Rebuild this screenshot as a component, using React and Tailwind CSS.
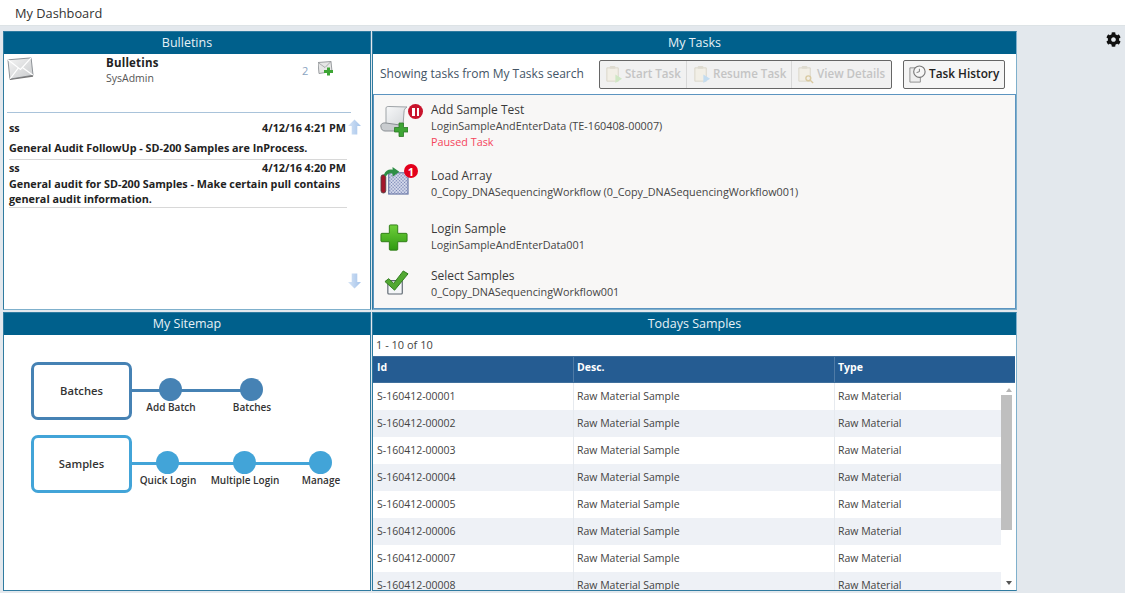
import { FaCog } from 'react-icons/fa';

const samples = ['00001', '00002', '00003', '00004', '00005', '00006', '00007', '00008'];

function PanelHeader({ title }) {
  return (
    <div className="h-[22px] shrink-0 bg-[#00608c] text-center text-[12.5px] leading-[22px] text-[#e6f1f6]">{title}</div>
  );
}

function MailIcon({ className }) {
  return (
    <svg viewBox="0 0 28 24" className={className}>
      <defs>
        <linearGradient id="mail" x1="0" x2="1" y1="0" y2="1">
          <stop offset="0" stopColor="#f4f4f4" />
          <stop offset="1" stopColor="#c9cbcd" />
        </linearGradient>
      </defs>
      <path d="M1 3 L25 1 L27 19 L3 23 Z" fill="url(#mail)" stroke="#8a8f94" strokeWidth="1" />
      <path d="M1 3 L14 13 L25 1 M3 23 L12 11 M27 19 L16 11" fill="none" stroke="#fff" strokeWidth="1.2" />
      <path d="M3 23 L27 19 L27 20.5 L3 24 Z" fill="#777" />
    </svg>
  );
}

function ArrowIcon({ down, className }) {
  return (
    <svg viewBox="0 0 14 16" className={className}>
      <defs>
        <linearGradient id={down ? 'arrow-down' : 'arrow-up'} x1="0" x2="1" y1="0" y2="0">
          <stop offset="0" stopColor="#d6e4f6" />
          <stop offset="1" stopColor="#a4c3ea" />
        </linearGradient>
      </defs>
      <path
        d={down ? 'M4 0 H10 V9 H14 L7 16 L0 9 H4 Z' : 'M7 0 L14 7 H10 V16 H4 V7 H0 Z'}
        fill={`url(#${down ? 'arrow-down' : 'arrow-up'})`}
      />
    </svg>
  );
}

function ClipIcon({ accent }) {
  return (
    <svg viewBox="0 0 20 20" className="size-[19px] shrink-0">
      <path d="M3 3 H15 V17 H3 Z" fill="#f2efe6" stroke="#d9d5c8" strokeWidth="1" />
      <rect x="6" y="1" width="6" height="3" rx="1" fill="#dedbd0" />
      {accent === 'search' ? (
        <g fill="none" stroke="#d9c9a0" strokeWidth="1.4">
          <circle cx="13" cy="14" r="2.6" />
          <path d="M15 16 L18 19" />
        </g>
      ) : (
        <path d="M12 10 L19 14.5 L12 19 Z" fill={accent} />
      )}
    </svg>
  );
}

function ScrollIcon() {
  return (
    <svg viewBox="0 0 28 31" className="mt-[4px] h-[31px] w-[28px]">
      <defs>
        <linearGradient id="paper" x1="0" x2="1" y1="0" y2="1">
          <stop offset="0" stopColor="#f7f8f9" />
          <stop offset="1" stopColor="#d3d6d9" />
        </linearGradient>
      </defs>
      <path d="M6 2 C6 0.5 8 0.5 9 0.5 L27 1 C25 2 24 4 24 6 L23 20 L6 20 Z" fill="url(#paper)" stroke="#9ea3a7" strokeWidth="1" />
      <path d="M1 21 C0 18 3 16.5 6 17 L20 19 L18 25 L5 25 C3 25 1 23.5 1 21 Z" fill="#c9cccf" stroke="#8a8f93" strokeWidth="1" />
      <path d="M19 17 H23.5 V21.5 H28 V26 H23.5 V30.5 H19 V26 H14.5 V21.5 H19 Z" fill="#3fa535" stroke="#2b7a25" strokeWidth="0.8" />
    </svg>
  );
}

function ArrayIcon() {
  return (
    <svg viewBox="0 0 30 30" className="mt-[-2px] h-[29px] w-[29px]">
      <defs>
        <pattern id="dots" width="2.4" height="2.4" patternUnits="userSpaceOnUse" patternTransform="rotate(45)">
          <rect width="2.4" height="2.4" fill="#dfe4f2" />
          <circle cx="1.2" cy="1.2" r="0.8" fill="#6b79ad" />
        </pattern>
      </defs>
      <rect x="9" y="7" width="20" height="22" fill="url(#dots)" stroke="#6c7aa8" strokeWidth="1.2" />
      <rect x="1" y="9" width="5" height="19" rx="2.5" fill="#a3162a" stroke="#444" strokeWidth="0.8" />
      <path d="M4 9 C6 4 10 3 13 4 L13 1 L20 6 L13 11 L13 8 C10 7 8 8 6 11 Z" fill="#2f8f46" />
    </svg>
  );
}

function PlusIcon() {
  return (
    <svg viewBox="0 0 30 30" className="mt-[3px] size-[28px]">
      <defs>
        <linearGradient id="plus" x1="0" x2="0" y1="0" y2="1">
          <stop offset="0" stopColor="#6fcf3a" />
          <stop offset="1" stopColor="#2f9a12" />
        </linearGradient>
      </defs>
      <path
        d="M10 2 Q10 1 11 1 H18 Q19 1 19 2 V10 H28 Q29 10 29 11 V18 Q29 19 28 19 H19 V27 Q19 28 18 28 H11 Q10 28 10 27 V19 H2 Q1 19 1 18 V11 Q1 10 2 10 H10 Z"
        fill="url(#plus)"
        stroke="#2c7a14"
        strokeWidth="1"
      />
    </svg>
  );
}

function CheckIcon() {
  return (
    <svg viewBox="0 0 26 26" className="ml-[4px] mt-[2px] size-[25px]">
      <rect x="4" y="11" width="15" height="14" rx="1" fill="#f4f6f8" stroke="#5d6670" strokeWidth="1.2" />
      <path d="M1 12 L5 9 L10 14 L20 1 L25 4 L11 21 Z" fill="#52a832" stroke="#2f7a1c" strokeWidth="1" />
    </svg>
  );
}

function TaskRow({ icon, badge, title, sub, note, className }) {
  return (
    <div className={`flex items-start ${className}`}>
      <div className="relative flex w-[57px] shrink-0 justify-start pl-[6px]">
        {icon}
        {badge}
      </div>
      <div className="min-w-0">
        <div className="text-[12px] leading-[16px] text-[#3a3a3a]">{title}</div>
        <div className="text-[10.8px] leading-[16px] text-[#444]">{sub}</div>
        {note && <div className="text-[10.8px] leading-[16px] text-[#f5455c]">{note}</div>}
      </div>
    </div>
  );
}

function SiteNode({ label, left, fill }) {
  return (
    <div className="absolute top-0 flex w-[90px] -translate-x-1/2 flex-col items-center" style={{ left }}>
      <div className={`size-[23px] rounded-full ${fill}`} />
      <span className="ml-[2px] mt-[-1px] text-[10px] font-semibold leading-[14px] text-[#333]">{label}</span>
    </div>
  );
}

function SiteRow({ label, border, fill, nodes, lineWidth, className }) {
  return (
    <div className={`flex items-start ${className}`}>
      <div className={`flex h-[58px] w-[101px] shrink-0 items-center justify-center rounded-[7px] border-[3px] bg-white text-[11.2px] font-semibold text-[#333] ${border}`}>
        {label}
      </div>
      <div className="relative mt-[16px] h-[40px] flex-1">
        <div className={`absolute left-0 top-[11px] h-[3px] ${fill}`} style={{ width: lineWidth }} />
        {nodes.map((n) => (
          <SiteNode key={n.label} label={n.label} left={n.left} fill={fill} />
        ))}
      </div>
    </div>
  );
}

export default function App() {
  return (
    <div className="flex h-[593px] w-[1125px] flex-col overflow-hidden bg-[#e3e8ed] font-['Open_Sans',sans-serif]">
      <div className="h-[26px] shrink-0 border-b border-[#dde3e6] bg-white pl-[15px] text-[12.8px] leading-[27px] text-[#333]">
        My Dashboard
      </div>

      <div className="relative ml-[3px] mt-[5px] box-content grid h-[560px] w-[1014px] grid-cols-[368px_645px] grid-rows-[279px_279px] gap-x-px gap-y-[2px]">
        {/* Bulletins */}
        <section className="flex flex-col overflow-hidden border border-[#2f7ba0] border-b-[#7fb0cc] bg-white">
          <PanelHeader title="Bulletins" />
          <div className="relative flex-1">
            <div className="mx-[3px] flex h-[59px] w-[344px] items-start border-b border-[#a9c3da]">
              <MailIcon className="mt-[2px] h-[25px] w-[27px] shrink-0" />
              <div className="ml-[72px] w-[196px] pt-px">
                <div className="text-[11.5px] font-bold leading-[15px] tracking-[0.2px] text-[#222]">Bulletins</div>
                <div className="text-[10.5px] leading-[17px] text-[#555]">SysAdmin</div>
              </div>
              <span className="mt-[9px] w-[16px] shrink-0 text-[11px] leading-[15px] text-[#8ba4bf]">2</span>
              <svg viewBox="0 0 16 14" className="mt-[7px] h-[15px] w-[16px] shrink-0">
                <path d="M0 1 L13 0 L14 10 L1 12 Z" fill="#e6e6e6" stroke="#85898d" strokeWidth="0.8" />
                <path d="M0 1 L7 6 L13 0" fill="none" stroke="#9a9da0" strokeWidth="0.8" />
                <path d="M9 6 H12 V8.5 H15 V11.5 H12 V14 H9 V11.5 H6 V8.5 H9 Z" fill="#3da535" />
              </svg>
            </div>

            <div className="ml-[5px] w-[338px] text-[10.8px] font-bold text-[#222]">
              <div className="flex justify-between pr-[1px] pt-[7px] leading-[15px]">
                <span>ss</span>
                <span>4/12/16 4:21 PM</span>
              </div>
              <div className="mt-[5px] border-b border-[#d8d8d8] pb-[4px] leading-[15px]">
                General Audit FollowUp - SD-200 Samples are InProcess.
              </div>
              <div className="flex justify-between pr-[1px] leading-[15px]">
                <span>ss</span>
                <span>4/12/16 4:20 PM</span>
              </div>
              <div className="border-b border-[#d8d8d8] pb-px pt-px leading-[15px]">
                General audit for SD-200 Samples - Make certain pull contains general audit information.
              </div>
            </div>

            <ArrowIcon className="absolute left-[344px] top-[65px] h-[16px] w-[13px]" />
            <ArrowIcon down className="absolute left-[344px] top-[219px] h-[16px] w-[13px]" />
          </div>
        </section>

        {/* My Tasks */}
        <section className="flex flex-col overflow-hidden border border-[#2f7ba0] border-b-[#7fb0cc] border-r-[#7fb0cc] bg-white">
          <PanelHeader title="My Tasks" />
          <div className="flex h-[41px] shrink-0 items-center border-b border-[#5c94c0] pl-[7px]">
            <span className="w-[219px] text-[12px] text-[#456]">Showing tasks from My Tasks search</span>
            <div className="flex h-[29px] w-[293px] rounded-[2px] border border-[#666] bg-[#f1f1f1] text-[11.6px] font-semibold text-[#c4c4c4]">
              <div className="flex w-[87px] items-center gap-[2px] border-r border-[#d8d8d8] pl-[4px]">
                <ClipIcon accent="#cfe7c4" />
                Start Task
              </div>
              <div className="flex w-[105px] items-center gap-[2px] border-r border-[#d8d8d8] pl-[5px]">
                <ClipIcon accent="#c3dcf0" />
                Resume Task
              </div>
              <div className="flex flex-1 items-center gap-[2px] pl-[4px]">
                <ClipIcon accent="search" />
                View Details
              </div>
            </div>
            <div className="ml-[11px] flex h-[29px] w-[102px] items-center gap-[2px] rounded-[2px] border border-[#666] bg-[#f5f5f5] pl-[4px] text-[11.8px] font-semibold text-[#222]">
              <svg viewBox="0 0 20 20" className="size-[19px] shrink-0">
                <path d="M2 3 H13 V18 H2 Z" fill="#eee" stroke="#8c8c8c" strokeWidth="1" />
                <circle cx="12" cy="7" r="6" fill="#f6f6f6" stroke="#777" strokeWidth="1.2" />
                <path d="M12 4 V7 L9 8" fill="none" stroke="#777" strokeWidth="1" />
              </svg>
              Task History
            </div>
          </div>
          <div className="flex-1 border-x border-b border-[#5c94c0] bg-[#f8f7f6] pt-[7px]">
            <TaskRow
              icon={<ScrollIcon />}
              badge={
                <span className="absolute left-[34px] top-[2px] flex size-[15px] items-center justify-center gap-[2px] rounded-full bg-[#c8142c]">
                  <span className="h-[8px] w-[2.5px] bg-white" />
                  <span className="h-[8px] w-[2.5px] bg-white" />
                </span>
              }
              title="Add Sample Test"
              sub="LoginSampleAndEnterData (TE-160408-00007)"
              note="Paused Task"
            />
            <TaskRow
              className="mt-[18px]"
              icon={<ArrayIcon />}
              badge={
                <span className="absolute left-[30px] top-[-4px] flex size-[14px] items-center justify-center rounded-full bg-[#e3001b] text-[11px] font-bold leading-none text-white">
                  1
                </span>
              }
              title="Load Array"
              sub="0_Copy_DNASequencingWorkflow (0_Copy_DNASequencingWorkflow001)"
            />
            <TaskRow className="mt-[21px]" icon={<PlusIcon />} title="Login Sample" sub="LoginSampleAndEnterData001" />
            <TaskRow className="mt-[15px]" icon={<CheckIcon />} title="Select Samples" sub="0_Copy_DNASequencingWorkflow001" />
          </div>
        </section>

        {/* My Sitemap */}
        <section className="flex flex-col overflow-hidden border border-[#2f7ba0] bg-white">
          <PanelHeader title="My Sitemap" />
          <div className="flex-1 pl-[27px] pt-[27px]">
            <SiteRow
              label="Batches"
              border="border-[#4682b4]"
              fill="bg-[#4682b4]"
              lineWidth="118px"
              nodes={[
                { label: 'Add Batch', left: '38px' },
                { label: 'Batches', left: '119px' },
              ]}
            />
            <SiteRow
              className="mt-[15px]"
              label="Samples"
              border="border-[#42a4d8]"
              fill="bg-[#42a4d8]"
              lineWidth="188px"
              nodes={[
                { label: 'Quick Login', left: '35px' },
                { label: 'Multiple Login', left: '112px' },
                { label: 'Manage', left: '188px' },
              ]}
            />
          </div>
        </section>

        {/* Todays Samples */}
        <section className="flex flex-col overflow-hidden border border-[#2f7ba0] border-r-[#7fb0cc] bg-white">
          <PanelHeader title="Todays Samples" />
          <div className="h-[21px] shrink-0 pl-[3px] text-[11px] leading-[20px] text-[#444]">1 - 10 of 10</div>
          <div className="mr-px grid h-[27px] shrink-0 grid-cols-[201px_261px_1fr] border-y border-[#3f6f9c] bg-[#255c92] text-[10.5px] font-bold leading-[21px] text-white">
            <div className="border-r border-[#4f7ba6] pl-[4px]">Id</div>
            <div className="border-r border-[#4f7ba6] pl-[3px]">Desc.</div>
            <div className="pl-[3px]">Type</div>
          </div>
          <div className="flex min-h-0 flex-1 overflow-hidden">
            <div className="w-[628px] shrink-0">
              {samples.map((s, i) => (
                <div
                  key={s}
                  className={`grid h-[27px] grid-cols-[201px_261px_1fr] text-[10.5px] leading-[27px] text-[#444] ${
                    i % 2 ? 'bg-[#eef1f6]' : 'bg-white'
                  }`}
                >
                  <div className="border-r border-[#e6eaef] pl-[4px]">S-160412-{s}</div>
                  <div className="border-r border-[#e6eaef] pl-[3px]">Raw Material Sample</div>
                  <div className="pl-[3px]">Raw Material</div>
                </div>
              ))}
            </div>
            <div className="flex w-[15px] shrink-0 flex-col items-center">
              <div className="mt-[5px] h-0 w-0 border-x-[3px] border-b-[4px] border-x-transparent border-b-[#b5b5b5]" />
              <div className="mt-[3px] h-[135px] w-[11px] self-start bg-[#bfbfbf]" />
              <div className="mt-auto mb-[5px] h-0 w-0 border-x-[3px] border-t-[4px] border-x-transparent border-t-[#555]" />
            </div>
          </div>
        </section>

        <FaCog className="absolute left-[1103px] top-[1px] size-[15px] text-[#111]" />
      </div>
    </div>
  );
}
